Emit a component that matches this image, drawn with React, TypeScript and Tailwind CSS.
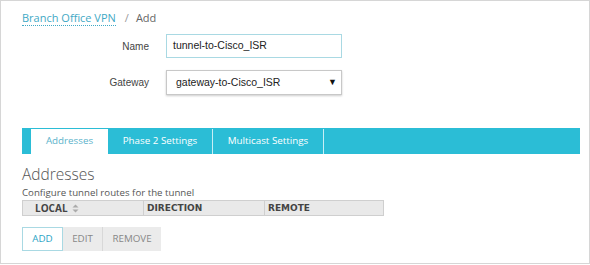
import React from "react";

const os = { fontFamily: '"Open Sans", "Liberation Sans", sans-serif' };
const dv = { fontFamily: '"DejaVu Sans", Verdana, sans-serif' };

export default function App() {
  return (
    <div className="w-[590px] h-[264px] border border-[#d6d6d6] bg-white overflow-hidden">
      <div className="pl-[21px] pr-[9px]">
        {/* breadcrumb */}
        <div className="pt-[9px] h-[26px] flex items-start text-[11px]" style={os}>
          <span className="text-[#3fa9c5] border-b border-dotted border-[#3fa9c5] leading-[15px]">Branch Office VPN</span>
          <span className="text-[#999] ml-[9px] leading-[15px]">/</span>
          <span className="text-[#666] ml-[7px] leading-[15px]">Add</span>
        </div>
        {/* form */}
        <div className="flex flex-col gap-[12px] mt-[7px]" style={{ fontFamily: '"Liberation Sans", Arial, sans-serif' }}>
          <div className="flex items-center">
            <div className="w-[128px] text-right text-[10px] text-[#444] pr-px">Name</div>
            <div className="ml-[16px] w-[176px] h-[24px] border border-[#a9d9e3] flex items-center pl-[6px] text-[10.5px] text-[#222]">
              tunnel-to-Cisco_ISR
            </div>
          </div>
          <div className="flex items-center">
            <div className="w-[128px] text-right text-[10px] text-[#444] pr-px">Gateway</div>
            <div className="ml-[16px] w-[176px] h-[25px] border border-[#c8c8c8] shadow-[0_1px_2px_rgba(0,0,0,0.2)] flex items-center justify-between pl-[9px] pr-[4px] text-[10.5px] text-[#222]">
              <span>gateway-to-Cisco_ISR</span>
              <span className="text-[9px] text-[#111]">▼</span>
            </div>
          </div>
        </div>
        {/* tabs */}
        <div className="mt-[33px] w-[558px] h-[26px] bg-[#2bbdd6] flex pl-[9px] pt-px text-[9.8px]" style={os}>
          <div className="bg-white text-[#5bb3cb] flex items-center h-[25px] w-[77px] justify-center">Addresses</div>
          <div className="text-white w-[105px] flex items-center justify-center border-r border-[#c8eef5] h-[25px]">Phase 2 Settings</div>
          <div className="text-white w-[111px] flex items-center justify-center border-r border-[#c8eef5] h-[25px]">Multicast Settings</div>
        </div>
        {/* section */}
        <div className="mt-[10px] text-[15.5px] leading-[20px] text-[#555] font-light" style={os}>Addresses</div>
        <div className="mt-[2px] text-[9.7px] leading-[14px] text-[#555]" style={os}>Configure tunnel routes for the tunnel</div>
        <div className="w-[362px] h-[16px] bg-[#e9e9e9] border border-[#cfcfcf] flex text-[9px] leading-[14px] text-[#444] font-bold">
          <div className="w-[121px] border-r border-[#cfcfcf] flex items-center pl-[12px] text-[10px]" style={os}>
            LOCAL
            <svg width="7" height="9" viewBox="0 0 7 9" className="ml-[4px]">
              <path d="M3.5 0.5 L6.5 3.5 L0.5 3.5 Z" fill="#aaa" />
              <path d="M3.5 8.5 L6.5 5.5 L0.5 5.5 Z" fill="#aaa" />
            </svg>
          </div>
          <div className="w-[121px] border-r border-[#cfcfcf] flex items-center pl-[3px]" style={dv}>DIRECTION</div>
          <div className="flex-1 flex items-center pl-[3px]" style={dv}>REMOTE</div>
        </div>
        {/* buttons */}
        <div className="mt-[11px] flex text-[9.8px]" style={os}>
          <div className="w-[41px] h-[24px] border border-[#a9d9e3] text-[#2ba5c6] flex items-center justify-center bg-white">ADD</div>
          <div className="w-[40px] h-[24px] bg-[#ebebeb] border-r border-[#d8d8d8] text-[#888] flex items-center justify-center">EDIT</div>
          <div className="w-[58px] h-[24px] bg-[#ebebeb] text-[#888] flex items-center justify-center">REMOVE</div>
        </div>
      </div>
    </div>
  );
}
